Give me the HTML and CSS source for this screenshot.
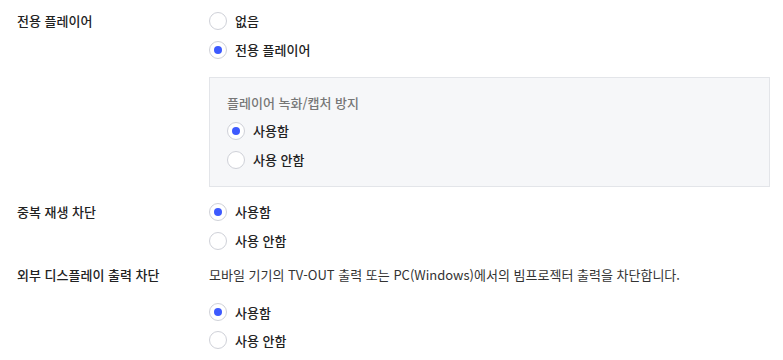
FILE: index.html
```html
<!DOCTYPE html>
<html lang="ko">
<head>
<meta charset="utf-8">
<link rel="stylesheet" href="styles.css">
</head>
<body>
<div class="settings">
  <div class="row">
    <div class="label">전용 플레이어</div>
    <div class="content">
      <div class="radio-group">
        <label class="radio"><span class="circle"></span><span class="text">없음</span></label>
        <label class="radio"><span class="circle checked"></span><span class="text">전용 플레이어</span></label>
      </div>
      <div class="subbox">
        <div class="subtitle">플레이어 녹화/캡처 방지</div>
        <div class="radio-group">
          <label class="radio"><span class="circle checked"></span><span class="text">사용함</span></label>
          <label class="radio"><span class="circle"></span><span class="text">사용 안함</span></label>
        </div>
      </div>
    </div>
  </div>
  <div class="row row-2">
    <div class="label">중복 재생 차단</div>
    <div class="content">
      <div class="radio-group">
        <label class="radio"><span class="circle checked"></span><span class="text">사용함</span></label>
        <label class="radio"><span class="circle"></span><span class="text">사용 안함</span></label>
      </div>
    </div>
  </div>
  <div class="row row-3">
    <div class="label">외부 디스플레이 출력 차단</div>
    <div class="content">
      <p class="desc">모바일 기기의 TV-OUT 출력 또는 PC(Windows)에서의 빔프로젝터 출력을 차단합니다.</p>
      <div class="radio-group tight">
        <label class="radio"><span class="circle checked"></span><span class="text">사용함</span></label>
        <label class="radio"><span class="circle"></span><span class="text">사용 안함</span></label>
      </div>
    </div>
  </div>
</div>
</body>
</html>
```
FILE: styles.css
```css
* { box-sizing: border-box; }
html, body { margin: 0; padding: 0; background: #fff; }
body {
  font-family: "Noto Sans CJK KR", "Noto Sans", sans-serif;
  font-size: 13px;
  color: #222;
}
.settings {
  padding: 6px 13px 0 17px;
}
.row {
  display: grid;
  grid-template-columns: 192px 1fr;
  align-items: start;
}
.row-2 { margin-top: 10px; }
.row-3 { margin-top: 5px; }
.label {
  line-height: 29px;
  font-weight: 500;
  color: #222;
}
.radio-group {
  display: flex;
  flex-direction: column;
}
.radio {
  display: flex;
  align-items: center;
  height: 29px;
  gap: 8px;
}
.tight .radio { height: 28px; }
.circle {
  width: 18px;
  height: 18px;
  border-radius: 50%;
  border: 1px solid #cfd1d8;
  background: #fff;
  display: flex;
  align-items: center;
  justify-content: center;
  flex: none;
}
.circle.checked::after {
  content: "";
  width: 8px;
  height: 8px;
  border-radius: 50%;
  background: #3d5afe;
}
.text {
  font-weight: 500;
  color: #222;
}
.subbox {
  margin-top: 13px;
  background: #f6f7f9;
  border: 1px solid #e3e5e9;
  padding: 16px 17px 12px;
}
.subtitle {
  line-height: 18px;
  color: #777;
  font-weight: 500;
  margin-bottom: 4px;
}
.desc {
  margin: 0 0 9px;
  line-height: 29px;
  color: #333;
}
```
